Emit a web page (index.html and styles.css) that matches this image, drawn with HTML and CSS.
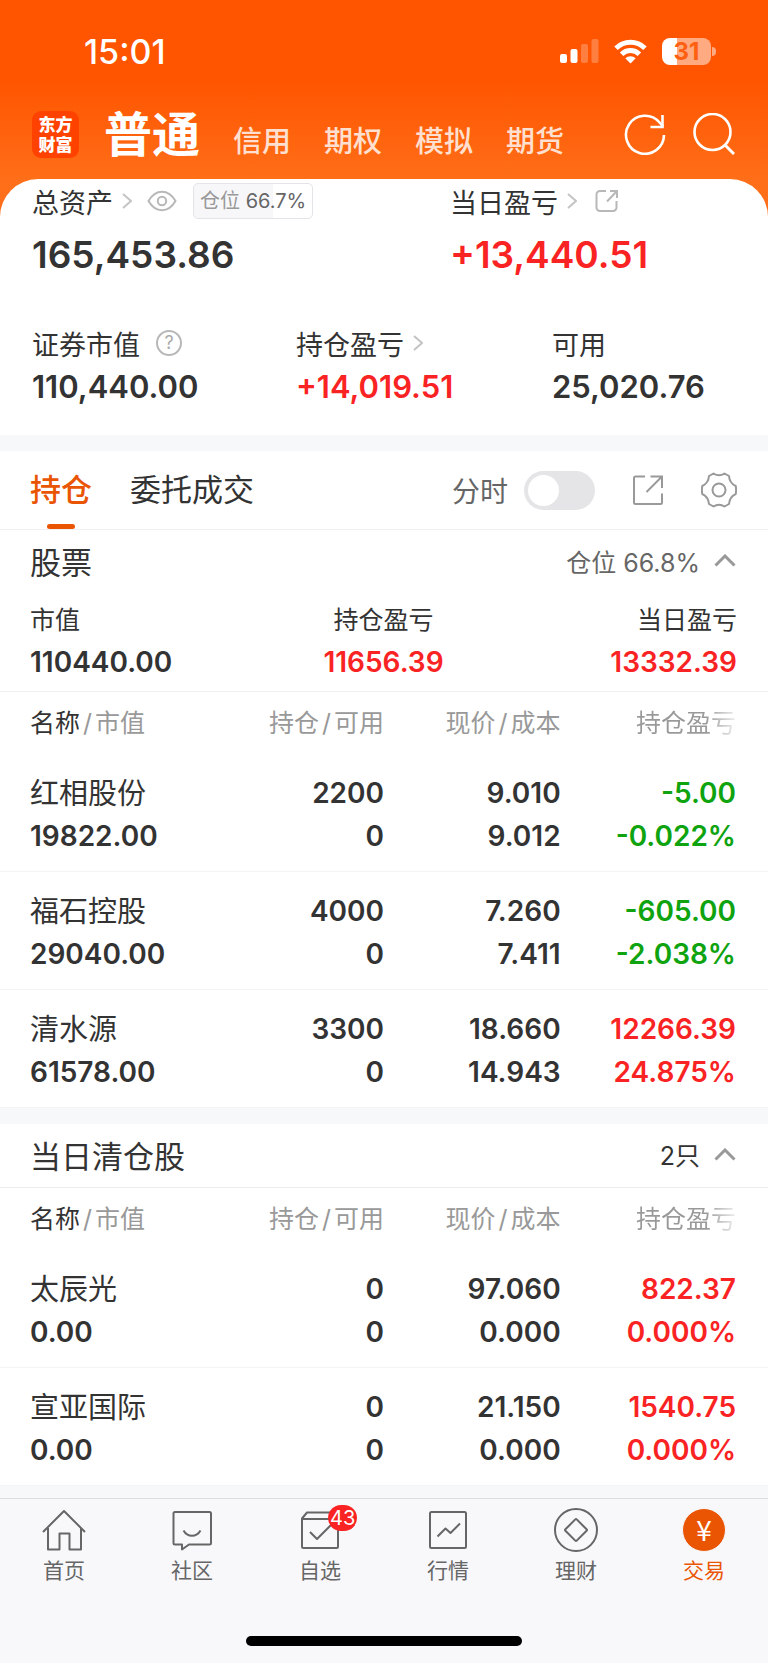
FILE: index.html
```html
<!DOCTYPE html>
<html lang="zh-CN">
<head>
    <meta charset="UTF-8">
    <meta name="viewport" content="width=device-width, initial-scale=1.0">
    <title>东方财富 - 交易</title>
    <link rel="stylesheet" href="styles.css">
</head>
<body>
    <header class="header">
        <div class="status-bar">
            <span class="time">15:01</span>
            <div class="status-icons">
                <svg width="39" height="25" viewBox="0 0 39 25" fill="#fff">
                    <rect x="0" y="15" width="7" height="9" rx="2"/>
                    <rect x="10.5" y="10" width="7" height="14" rx="2"/>
                    <rect x="21" y="5" width="7" height="19" rx="2" opacity="0.25"/>
                    <rect x="31.500" y="0" width="7" height="24" rx="2" opacity="0.25"/>
                </svg>
                <svg width="33" height="25" viewBox="0 0 33 25" fill="none" stroke="#fff" stroke-width="5">
                    <path d="M2 9.2a20.7 20.7 0 0 1 29 0"/>
                    <path d="M7.6 15.2a12.8 12.8 0 0 1 17.8 0"/>
                    <path d="M11.3 19.3a7.4 7.4 0 0 1 10.4 0L16.5 24.5z" fill="#fff" stroke="none"/>
                </svg>
                <div class="battery"><span class="battery-level">31</span></div>
            </div>
        </div>
        <div class="nav">
            <div class="logo">东方<br>财富</div>
            <nav class="accounts">
                <a href="#" class="account active">普通</a>
                <a href="#" class="account">信用</a>
                <a href="#" class="account">期权</a>
                <a href="#" class="account">模拟</a>
                <a href="#" class="account">期货</a>
            </nav>
            <div class="nav-actions">
                <button class="icon-btn" aria-label="刷新">
                    <svg width="42" height="42" viewBox="0 0 42 42" fill="none" stroke="#fff" stroke-width="2.6">
                        <path d="M40 22A19 19 0 1 1 35.500 9.500L39 13.500"/>
                        <path d="M38.5 2V14H26.5"/>
                    </svg>
                </button>
                <button class="icon-btn" aria-label="搜索">
                    <svg width="42" height="42" viewBox="0 0 42 42" fill="none" stroke="#fff" stroke-width="2.6">
                        <circle cx="19.5" cy="19" r="18"/>
                        <path d="M31.5 31.5L41 41" stroke-width="3"/>
                    </svg>
                </button>
            </div>
        </div>
    </header>

    <section class="assets">
        <div class="assets-main">
            <div>
                <div class="asset-label">
                    总资产
                    <svg class="chevron" width="10" height="16" viewBox="0 0 10 16"><path d="M1 1l8 7-8 7"/></svg>
                    <button class="icon-btn eye" aria-label="隐藏金额">
                        <svg width="30" height="22" viewBox="0 0 30 22" fill="none" stroke="#b8b8b8" stroke-width="2">
                            <path d="M1.5 11C5 5 9.5 1.8 15 1.8S25 5 28.5 11C25 17 20.5 20.2 15 20.2S5 17 1.5 11z"/>
                            <circle cx="15" cy="11" r="4.2"/>
                        </svg>
                    </button>
                    <span class="position-tag">仓位 <em>66.7%</em></span>
                </div>
                <div class="asset-total">165,453.86</div>
            </div>
            <div>
                <div class="asset-label">
                    当日盈亏
                    <svg class="chevron" width="10" height="16" viewBox="0 0 10 16"><path d="M1 1l8 7-8 7"/></svg>
                    <button class="icon-btn share" aria-label="分享">
                        <svg width="24" height="24" viewBox="0 0 24 24" fill="none" stroke="#b8b8b8" stroke-width="2">
                            <path d="M11 2H5a3.5 3.5 0 0 0-3.5 3.5v13A3.5 3.5 0 0 0 5 22h13a3.5 3.5 0 0 0 3.5-3.5V12"/>
                            <path d="M15 2h7v7M22 2L12 12.5"/>
                        </svg>
                    </button>
                </div>
                <div class="asset-total up">+13,440.51</div>
            </div>
        </div>
        <div class="assets-sub">
            <div>
                <div class="asset-label">
                    证券市值
                    <button class="icon-btn help" aria-label="说明">?</button>
                </div>
                <div class="asset-value">110,440.00</div>
            </div>
            <div>
                <div class="asset-label">
                    持仓盈亏
                    <svg class="chevron" width="10" height="16" viewBox="0 0 10 16"><path d="M1 1l8 7-8 7"/></svg>
                </div>
                <div class="asset-value up">+14,019.51</div>
            </div>
            <div>
                <div class="asset-label">可用</div>
                <div class="asset-value">25,020.76</div>
            </div>
        </div>
    </section>

    <main>
        <section class="panel">
            <div class="tabs">
                <a href="#" class="tab active">持仓</a>
                <a href="#" class="tab">委托成交</a>
                <div class="tools">
                    <label class="minute" for="minute">分时</label>
                    <input class="switch" type="checkbox" id="minute">
                    <button class="icon-btn" aria-label="分享持仓">
                        <svg width="30" height="30" viewBox="0 0 30 30" fill="none" stroke="#999" stroke-width="2">
                            <path d="M12 1.5H2.5A1.5 1.5 0 0 0 1 3V27.5A1.5 1.5 0 0 0 2.5 29H27.5A1.5 1.5 0 0 0 29 27.5V18.5"/>
                            <path d="M17.5 1.5H29V13M29 1.5L13.5 17"/>
                        </svg>
                    </button>
                    <button class="icon-btn" aria-label="设置">
                        <svg width="36" height="36" viewBox="0 0 36 36" fill="none" stroke="#999" stroke-width="2" stroke-linejoin="round">
                            <path d="M12.5 1.5Q18 5 23.5 1.5L28 4Q28.500 11 34.700 14Q35.500 18 34.700 22Q28.500 25 28 32L23.5 34.5Q18 31 12.5 34.5L8 32Q7.500 25 1.300 22Q.5 18 1.300 14Q7.500 11 8 4z"/>
                            <circle cx="18" cy="18" r="6.5"/>
                        </svg>
                    </button>
                </div>
            </div>

            <div class="section-head">
                <h2>股票</h2>
                <button class="fold">仓位 66.8%
                    <svg width="22" height="13" viewBox="0 0 22 13"><path d="M1.5 11.5L11 2l9.5 9.5"/></svg>
                </button>
            </div>
            <div class="summary">
                <div>
                    <div class="summary-label">市值</div>
                    <div class="summary-value">110440.00</div>
                </div>
                <div>
                    <div class="summary-label">持仓盈亏</div>
                    <div class="summary-value up">11656.39</div>
                </div>
                <div>
                    <div class="summary-label">当日盈亏</div>
                    <div class="summary-value up">13332.39</div>
                </div>
            </div>

            <table class="stocks">
                <thead>
                    <tr>
                        <th><b>名称</b><i>/</i>市值</th>
                        <th>持仓<i>/</i>可用</th>
                        <th>现价<i>/</i>成本</th>
                        <th><span class="fade">持仓盈亏</span></th>
                    </tr>
                </thead>
                <tbody>
                    <tr>
                        <td><span class="name">红相股份</span><span>19822.00</span></td>
                        <td><span>2200</span><span>0</span></td>
                        <td><span>9.010</span><span>9.012</span></td>
                        <td class="down"><span>-5.00</span><span>-0.022%</span></td>
                    </tr>
                    <tr>
                        <td><span class="name">福石控股</span><span>29040.00</span></td>
                        <td><span>4000</span><span>0</span></td>
                        <td><span>7.260</span><span>7.411</span></td>
                        <td class="down"><span>-605.00</span><span>-2.038%</span></td>
                    </tr>
                    <tr>
                        <td><span class="name">清水源</span><span>61578.00</span></td>
                        <td><span>3300</span><span>0</span></td>
                        <td><span>18.660</span><span>14.943</span></td>
                        <td class="up"><span>12266.39</span><span>24.875%</span></td>
                    </tr>
                </tbody>
            </table>
        </section>

        <section class="panel">
            <div class="section-head lined">
                <h2>当日清仓股</h2>
                <button class="fold dark">2只
                    <svg width="22" height="13" viewBox="0 0 22 13"><path d="M1.5 11.5L11 2l9.5 9.5"/></svg>
                </button>
            </div>
            <table class="stocks">
                <thead>
                    <tr>
                        <th><b>名称</b><i>/</i>市值</th>
                        <th>持仓<i>/</i>可用</th>
                        <th>现价<i>/</i>成本</th>
                        <th><span class="fade">持仓盈亏</span></th>
                    </tr>
                </thead>
                <tbody>
                    <tr>
                        <td><span class="name">太辰光</span><span>0.00</span></td>
                        <td><span>0</span><span>0</span></td>
                        <td><span>97.060</span><span>0.000</span></td>
                        <td class="up"><span>822.37</span><span>0.000%</span></td>
                    </tr>
                    <tr>
                        <td><span class="name">宣亚国际</span><span>0.00</span></td>
                        <td><span>0</span><span>0</span></td>
                        <td><span>21.150</span><span>0.000</span></td>
                        <td class="up"><span>1540.75</span><span>0.000%</span></td>
                    </tr>
                </tbody>
            </table>
        </section>
    </main>

    <footer class="footer">
        <nav class="tabbar">
            <a href="#" class="tabbar-item">
                <svg class="tabbar-icon" viewBox="0 0 44 44">
                    <path d="M1 24L22 3l21 21"/>
                    <path d="M6 20v21.5h11.5v-16h10v16H39V20"/>
                </svg>
                首页
            </a>
            <a href="#" class="tabbar-item">
                <svg class="tabbar-icon" viewBox="0 0 44 44">
                    <path d="M5 4h34.5A1.5 1.5 0 0 1 41 5.5V35a1.5 1.5 0 0 1-1.5 1.5H19L12 41.5v-5H5A1.5 1.5 0 0 1 3.5 35V5.5A1.5 1.5 0 0 1 5 4z"/>
                    <path d="M13.5 22.5c4 7 13 7 17 0"/>
                </svg>
                社区
            </a>
            <a href="#" class="tabbar-item">
                <svg class="tabbar-icon" viewBox="0 0 44 44">
                    <path d="M4 11h36v27.500A1.500 1.500 0 0 1 38.500 40h-33A1.500 1.500 0 0 1 4 38.500V10.500L9 4.500h28"/>
                    <path d="M12 24l7 7 14-14"/>
                </svg>
                <span class="badge">43</span>
                自选
            </a>
            <a href="#" class="tabbar-item">
                <svg class="tabbar-icon" viewBox="0 0 44 44">
                    <rect x="4" y="4" width="36" height="36" rx="1.5"/>
                    <path d="M11.5 28.5l8-8 5 4.5 9.5-9.5"/>
                </svg>
                行情
            </a>
            <a href="#" class="tabbar-item">
                <svg class="tabbar-icon" viewBox="0 0 44 44">
                    <circle cx="22" cy="22" r="21"/>
                    <rect x="14" y="14" width="16" height="16" rx="1" transform="rotate(45 22 22)"/>
                </svg>
                理财
            </a>
            <a href="#" class="tabbar-item active">
                <span class="tabbar-icon coin">¥</span>
                交易
            </a>
        </nav>
        <div class="home-indicator"></div>
    </footer>
</body>
</html>
```
FILE: styles.css
```css
* {
    box-sizing: border-box;
}
body {
    margin: 0;
    font-family: Inter, "Noto Sans CJK SC", sans-serif;
    color: #333;
    background-color: #f7f8fa;
}
a {
    color: inherit;
    text-decoration: none;
}
svg {
    display: block;
    flex: none;
}
.icon-btn {
    padding: 0;
    border: none;
    background: none;
    cursor: pointer;
}
.up {
    color: #fa2323;
}
.down {
    color: #0fa30f;
}

/* header */
.header {
    padding-bottom: 54px;
    color: #fff;
    background: linear-gradient(#ff5500 80px, #ff6e18 180px);
}
.status-bar {
    display: flex;
    align-items: center;
    justify-content: space-between;
    height: 102px;
    padding: 0 52px 0 84px;
}
.time {
    font-size: 34px;
    font-weight: 500;
}
.status-icons {
    display: flex;
    align-items: center;
    gap: 15px;
}
.battery {
    position: relative;
    width: 49px;
    height: 27px;
    margin-right: 5px;
    border-radius: 8px;
    background: linear-gradient(90deg, #fff 31%, #ffaa80 31%);
}
.battery::after {
    content: "";
    position: absolute;
    top: 9px;
    right: -5px;
    width: 4px;
    height: 9px;
    border-radius: 0 4px 4px 0;
    background-color: #ffaa80;
}
.battery-level {
    display: block;
    text-align: center;
    font-size: 24px;
    font-weight: 700;
    line-height: 27px;
    color: #ff5f10;
}
.nav {
    display: flex;
    align-items: center;
    height: 64px;
    padding: 0 33px 0 32px;
}
.logo {
    width: 47px;
    height: 47px;
    padding-top: 4px;
    border-radius: 9px;
    text-align: center;
    font-size: 17px;
    font-weight: 900;
    line-height: 20px;
    background-color: #ff4200;
}
.accounts {
    display: flex;
    align-items: baseline;
    gap: 33px;
    margin-left: 25px;
    padding-top: 8px;
}
.account {
    font-size: 29px;
    font-weight: 500;
    line-height: 60px;
    color: #ffe0d0;
}
.account.active {
    font-size: 48px;
    font-weight: 700;
    color: #fff;
}
.nav-actions {
    display: flex;
    gap: 27px;
    margin-left: auto;
}

/* assets card */
.assets {
    margin-top: -41px;
    padding: 2px 32px 28px;
    border-radius: 38px 38px 0 0;
    background-color: #fff;
}
.assets-main {
    display: grid;
    grid-template-columns: 418fr 286fr;
    margin-bottom: 44px;
}
.assets-sub {
    display: grid;
    grid-template-columns: 264fr 256fr 184fr;
}
.asset-label {
    display: flex;
    align-items: center;
    height: 40px;
    font-size: 27px;
}
.chevron {
    margin-left: 9px;
    fill: none;
    stroke: #c4c4c4;
    stroke-width: 2;
}
.eye {
    margin-left: 15px;
}
.share {
    margin-left: 18px;
}
.help {
    width: 26px;
    height: 26px;
    margin-left: 16px;
    border: 2px solid #b8b8b8;
    border-radius: 50%;
    font-family: inherit;
    font-size: 18px;
    line-height: 22px;
    color: #aaa;
}
.position-tag {
    height: 36px;
    margin-left: 16px;
    padding: 0 6px;
    border: 1px solid #e4e4e8;
    border-radius: 5px;
    font-size: 20px;
    line-height: 34px;
    color: #999;
    background: linear-gradient(90deg, #f7f7fa 66.7%, #fff 66.7%);
}
.position-tag em {
    font-style: normal;
    color: #666;
}
.asset-total {
    margin-top: 10px;
    font-size: 37px;
    font-weight: 600;
    line-height: 48px;
}
.asset-value {
    margin-top: 4px;
    font-size: 31px;
    font-weight: 600;
    line-height: 40px;
}

/* panels */
.panel {
    margin-top: 16px;
    background-color: #fff;
}
.tabs {
    display: flex;
    align-items: center;
    gap: 38px;
    height: 79px;
    padding: 0 31px 0 30px;
    border-bottom: 1px solid #f0f0f2;
}
.tab {
    position: relative;
    font-size: 31px;
    line-height: 78px;
}
.tab.active {
    font-weight: 500;
    color: #ea5504;
}
.tab.active::after {
    content: "";
    position: absolute;
    bottom: 0;
    left: 50%;
    width: 28px;
    height: 5px;
    margin-left: -14px;
    border-radius: 3px;
    background-color: #ea5504;
}
.tools {
    display: flex;
    align-items: center;
    gap: 38px;
    margin-left: auto;
}
.minute {
    margin-right: -22px;
    font-size: 28px;
    color: #666;
}
.switch {
    appearance: none;
    width: 71px;
    height: 39px;
    margin: 0;
    padding: 4px;
    border-radius: 20px;
    background-color: #e5e5e7;
    cursor: pointer;
}
.switch::before {
    content: "";
    display: block;
    width: 31px;
    height: 31px;
    border-radius: 50%;
    background-color: #fff;
}
.switch:checked {
    background-color: #ea5504;
}
.switch:checked::before {
    margin-left: auto;
}
.section-head {
    display: flex;
    align-items: center;
    justify-content: space-between;
    height: 64px;
    padding: 0 32px 3px 30px;
}
.section-head.lined {
    border-bottom: 1px solid #ececee;
}
.section-head h2 {
    margin: 0;
    font-size: 31px;
    font-weight: 400;
}
.fold {
    display: flex;
    align-items: center;
    gap: 14px;
    padding: 0;
    border: none;
    font-family: inherit;
    font-size: 25px;
    color: #666;
    background: none;
    cursor: pointer;
}
.fold.dark {
    color: #333;
}
.fold svg {
    fill: none;
    stroke: #999;
    stroke-width: 3;
}
.summary {
    display: grid;
    grid-template-columns: 1fr 1fr 1fr;
    padding: 8px 31px 9px 30px;
    border-bottom: 1px solid #f0f0f2;
    text-align: center;
}
.summary > :first-child {
    text-align: left;
}
.summary > :last-child {
    text-align: right;
}
.summary-label {
    font-size: 25px;
    line-height: 36px;
}
.summary-value {
    margin-top: 4px;
    font-size: 28px;
    font-weight: 600;
    line-height: 40px;
}

/* stock tables */
.stocks {
    width: 100%;
    border-collapse: collapse;
    table-layout: fixed;
}
.stocks th {
    width: 23%;
    height: 62px;
    padding: 0;
    text-align: right;
    font-size: 25px;
    font-weight: 400;
    line-height: 40px;
    color: #999;
}
.stocks th b {
    font-weight: 400;
    color: #333;
}
.stocks th i {
    padding: 0 3px;
    font-style: normal;
}
.stocks td {
    padding: 18px 0 13px;
    border-bottom: 1px solid #f4f4f6;
    text-align: right;
    font-size: 28px;
    font-weight: 600;
    line-height: 43px;
}
.stocks th:first-child,
.stocks td:first-child {
    width: 27%;
    padding-left: 30px;
    text-align: left;
}
.stocks th:last-child,
.stocks td:last-child {
    width: 27%;
    padding-right: 32px;
}
.stocks td span {
    display: block;
}
.stocks .name {
    font-size: 29px;
    font-weight: 400;
}
.fade {
    background: linear-gradient(90deg, #999 70%, #eee);
    background-clip: text;
    -webkit-background-clip: text;
    color: transparent;
}

/* bottom bar */
.footer {
    margin-top: 12px;
    padding-bottom: 17px;
    border-top: 1px solid #dedee0;
    background-color: #f8f8fb;
}
.tabbar {
    display: flex;
    padding-top: 9px;
}
.tabbar-item {
    position: relative;
    display: flex;
    flex: 1;
    flex-direction: column;
    align-items: center;
    gap: 5px;
    font-size: 21px;
    line-height: 28px;
    color: #666;
}
.tabbar-item.active {
    color: #ea5504;
}
.tabbar-icon {
    width: 44px;
    height: 44px;
    fill: none;
    stroke: #666;
    stroke-width: 2;
    stroke-linejoin: round;
}
.coin {
    border: 1px solid #f8f8fb;
    border-radius: 50%;
    text-align: center;
    font-family: "Noto Sans CJK SC", sans-serif;
    font-size: 28px;
    line-height: 40px;
    color: #fff;
    background-color: #ea5504;
}
.badge {
    position: absolute;
    top: -3px;
    left: 50%;
    height: 26px;
    margin-left: 8px;
    padding: 0 2px;
    border-radius: 13px;
    font-size: 20px;
    line-height: 26px;
    color: #fff;
    background-color: #fa2323;
}
.home-indicator {
    width: 36%;
    height: 10px;
    margin: 51px auto 0;
    border-radius: 5px;
    background-color: #000;
}
```
